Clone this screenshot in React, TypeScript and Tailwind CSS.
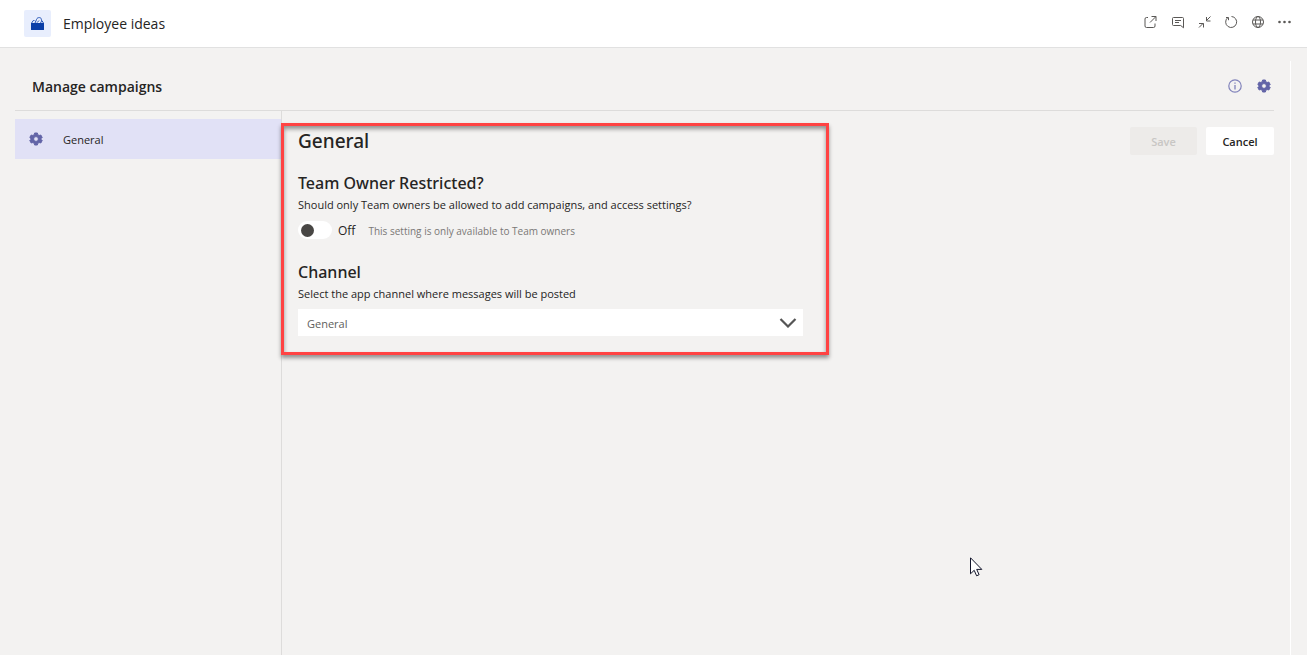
import React from 'react';

function GearIcon({ className }: { className?: string }) {
  return (
    <svg viewBox="0 0 14 14" className={className} fill="currentColor" stroke="currentColor" strokeLinejoin="round" aria-hidden="true">
      <path
        fillRule="evenodd"
        strokeWidth="1"
        d="M5.600 1h2.800l.4 1.700 1.300.8 1.700-.5 1.400 2.500-1.200 1.200v.6l1.200 1.200-1.400 2.500-1.700-.5-1.300.8-.4 1.700H5.600l-.4-1.700-1.300-.8-1.700.5L.8 8.500 2 7.300v-.6L.8 5.500 2.200 3l1.700.5 1.300-.8zM7 4.600a2.400 2.400 0 1 0 0 4.800 2.400 2.400 0 0 0 0-4.800z"
      />
    </svg>
  );
}

const toolbar: { label: string; drawing: React.ReactNode }[] = [
  {
    label: 'Open in new window',
    drawing: <path d="M5 2.500H3.500A1.500 1.500 0 0 0 2 4v7a1.500 1.500 0 0 0 1.500 1.500h7A1.500 1.500 0 0 0 12 11V8.500M8.500 1.500H13V6M12.800 1.700 7 7.500" />,
  },
  {
    label: 'Chat',
    drawing: <path d="M3.500 2.500h9a1 1 0 0 1 1 1v9.300l-2.800-2.300H3.500a1 1 0 0 1-1-1v-6a1 1 0 0 1 1-1zM5 5.500h6M5 7.500h4" />,
  },
  {
    label: 'Collapse',
    drawing: <path d="M13.500 1.500 9.300 5.700M9.500 2v4h4M2 12.500l4.200-4.200M2 8.500h4.500v4" />,
  },
  {
    label: 'Refresh',
    drawing: <path d="M3.600 2.800A5.500 5.500 0 1 0 7.500 1.500M2 2.500h2.500V5.200" />,
  },
  {
    label: 'Open in browser',
    drawing: (
      <>
        <circle cx="7" cy="7" r="5.500" />
        <ellipse cx="7" cy="7" rx="2.500" ry="5.500" />
        <path d="M2 5h10M2 9h10" />
      </>
    ),
  },
  {
    label: 'More options',
    drawing: (
      <g fill="currentColor" stroke="none">
        <circle cx="1.500" cy="7" r="1.300" />
        <circle cx="6.500" cy="7" r="1.300" />
        <circle cx="11.500" cy="7" r="1.300" />
      </g>
    ),
  },
];

function AppHeader() {
  return (
    <header className="flex h-12 shrink-0 items-center border-b border-[#e1e1e1] bg-white pl-6 pr-[15px]">
      <span className="flex size-[27px] items-center justify-center rounded-xs bg-[#e8eefd]">
        <svg viewBox="0 0 13 13" className="size-[13px]" aria-hidden="true">
          <path d="M0 6h13v6.500a.5.500 0 0 1-.5.500h-12a.5.500 0 0 1-.5-.5z" fill="#0b3fa8" />
          <path d="M.5 6.200 2.300 3.500h1.200M12.500 6.200l-1.500-2.500M4 6l1.500-3.500C6 1 7.200.5 8.500.6 9.800.7 10.300 1.500 10.300 2.300 11 3.300 10.500 4.500 9.500 6M6 5.700 8 3.500" fill="none" stroke="#2453b5" />
        </svg>
      </span>
      <h1 className="ml-3 text-[14px] leading-5 text-[#252423]">Employee ideas</h1>
      <div className="ml-auto flex items-center gap-[13px] pb-[3px] text-[#5a5856]">
        {toolbar.map(({ label, drawing }) => (
          <button key={label} type="button" aria-label={label}>
            <svg viewBox="0 0 14 14" className="block size-[14px]" fill="none" stroke="currentColor" strokeWidth="1">
              {drawing}
            </svg>
          </button>
        ))}
      </div>
    </header>
  );
}

function SettingsForm() {
  return (
    <section className="-ml-px mt-3 w-[548px] border-[3px] border-[#ff4343] px-[14px] pb-4 shadow-[0_3px_4px_rgba(0,0,0,0.4),inset_0_3px_4px_rgba(0,0,0,0.4)]">
      <h2 className="pt-[3px] font-['Noto_Sans',sans-serif] text-[19px] font-medium leading-6">General</h2>

      <h3 className="mt-5 font-['Noto_Sans',sans-serif] text-[16px] font-medium leading-5">Team Owner Restricted?</h3>
      <p className="mt-1 text-[11px] leading-4">Should only Team owners be allowed to add campaigns, and access settings?</p>
      <div className="mt-2 flex h-[18px] items-center">
        <input
          id="owner-restricted"
          type="checkbox"
          role="switch"
          className="flex h-[18px] w-[34px] appearance-none items-center rounded-full bg-white px-[3px] before:size-[13px] before:rounded-full before:bg-[#484644] checked:justify-end"
        />
        <label htmlFor="owner-restricted" className="ml-[6px] pt-px text-[12px] leading-4">Off</label>
        <span className="ml-[13px] pt-[2px] text-[10px] leading-4 text-[#7a7876]">This setting is only available to Team owners</span>
      </div>

      <h3 className="mt-[23px] font-['Noto_Sans',sans-serif] text-[16px] font-medium leading-5">
        <label htmlFor="channel">Channel</label>
      </h3>
      <p className="mt-1 text-[11px] leading-4">Select the app channel where messages will be posted</p>
      <div className="mr-[9px] mt-[7px] grid items-center">
        <select id="channel" className="col-start-1 row-start-1 h-[27px] w-full appearance-none bg-white px-[9px] pt-[3px] text-[11px] text-[#605e5c]">
          <option>General</option>
        </select>
        <svg viewBox="0 0 18 10" className="pointer-events-none col-start-1 row-start-1 mr-[6px] h-[10px] w-[18px] justify-self-end" fill="none" stroke="#555" strokeWidth="2.200" aria-hidden="true">
          <path d="m1.500 1 7.500 7.500L16.500 1" />
        </svg>
      </div>
    </section>
  );
}

export default function App() {
  return (
    <div className="relative flex min-h-screen flex-col bg-[#f3f2f1] font-['Open_Sans','Noto_Sans',sans-serif] text-[#252423]">
      <AppHeader />
      <div className="flex flex-1 pl-[15px] pr-4 pt-[13px]">
        <main className="flex flex-1 flex-col border-r border-white pr-4">
          <div className="flex h-[50px] shrink-0 items-center border-b border-[#dddcdb] pl-[17px] pr-[3px]">
            <h2 className="pt-[2px] text-[14px] font-semibold leading-5">Manage campaigns</h2>
            <div className="ml-auto flex items-center gap-[15px] text-[#6264a7]">
              <button type="button" aria-label="About">
                <svg viewBox="0 0 14 14" className="block size-[14px]" fill="none" stroke="#8183bb" aria-hidden="true">
                  <circle cx="7" cy="7" r="6.200" strokeWidth="1.200" />
                  <path d="M7 6v4.500M7 3.500v1.300" strokeWidth="1.300" />
                </svg>
              </button>
              <button type="button" aria-label="Settings">
                <GearIcon className="block size-[14px]" />
              </button>
            </div>
          </div>
          <div className="flex flex-1">
            <nav className="w-[266px] shrink-0 pt-2">
              <a href="#general" className="flex h-10 items-center bg-[#e1e1f6] pl-[14px] text-[11px]">
                <GearIcon className="size-[14px] text-[#6264a7]" />
                <span className="ml-5 pt-[2px]">General</span>
              </a>
            </nav>
            <div className="flex flex-1 items-start border-l border-[#dddcdb]">
              <SettingsForm />
              <div className="ml-auto flex gap-[9px] pt-4 text-[11px] font-semibold">
                <button type="button" disabled className="h-7 w-[67px] rounded-xs bg-[#edebe9] pt-[2px] text-[#c8c6c4]">Save</button>
                <button type="button" className="h-7 w-[68px] rounded-xs bg-white pt-[2px]">Cancel</button>
              </div>
            </div>
          </div>
        </main>
      </div>
      <svg viewBox="0 0 13 20" className="pointer-events-none absolute left-[970px] top-[557px] h-5 w-[13px]" aria-hidden="true">
        <path d="M.5.8v16l3.700-3.500 2.400 5.500 2.500-1.100-2.400-5.300h5.100z" fill="#fff" stroke="#11142a" strokeWidth="1" />
      </svg>
    </div>
  );
}
